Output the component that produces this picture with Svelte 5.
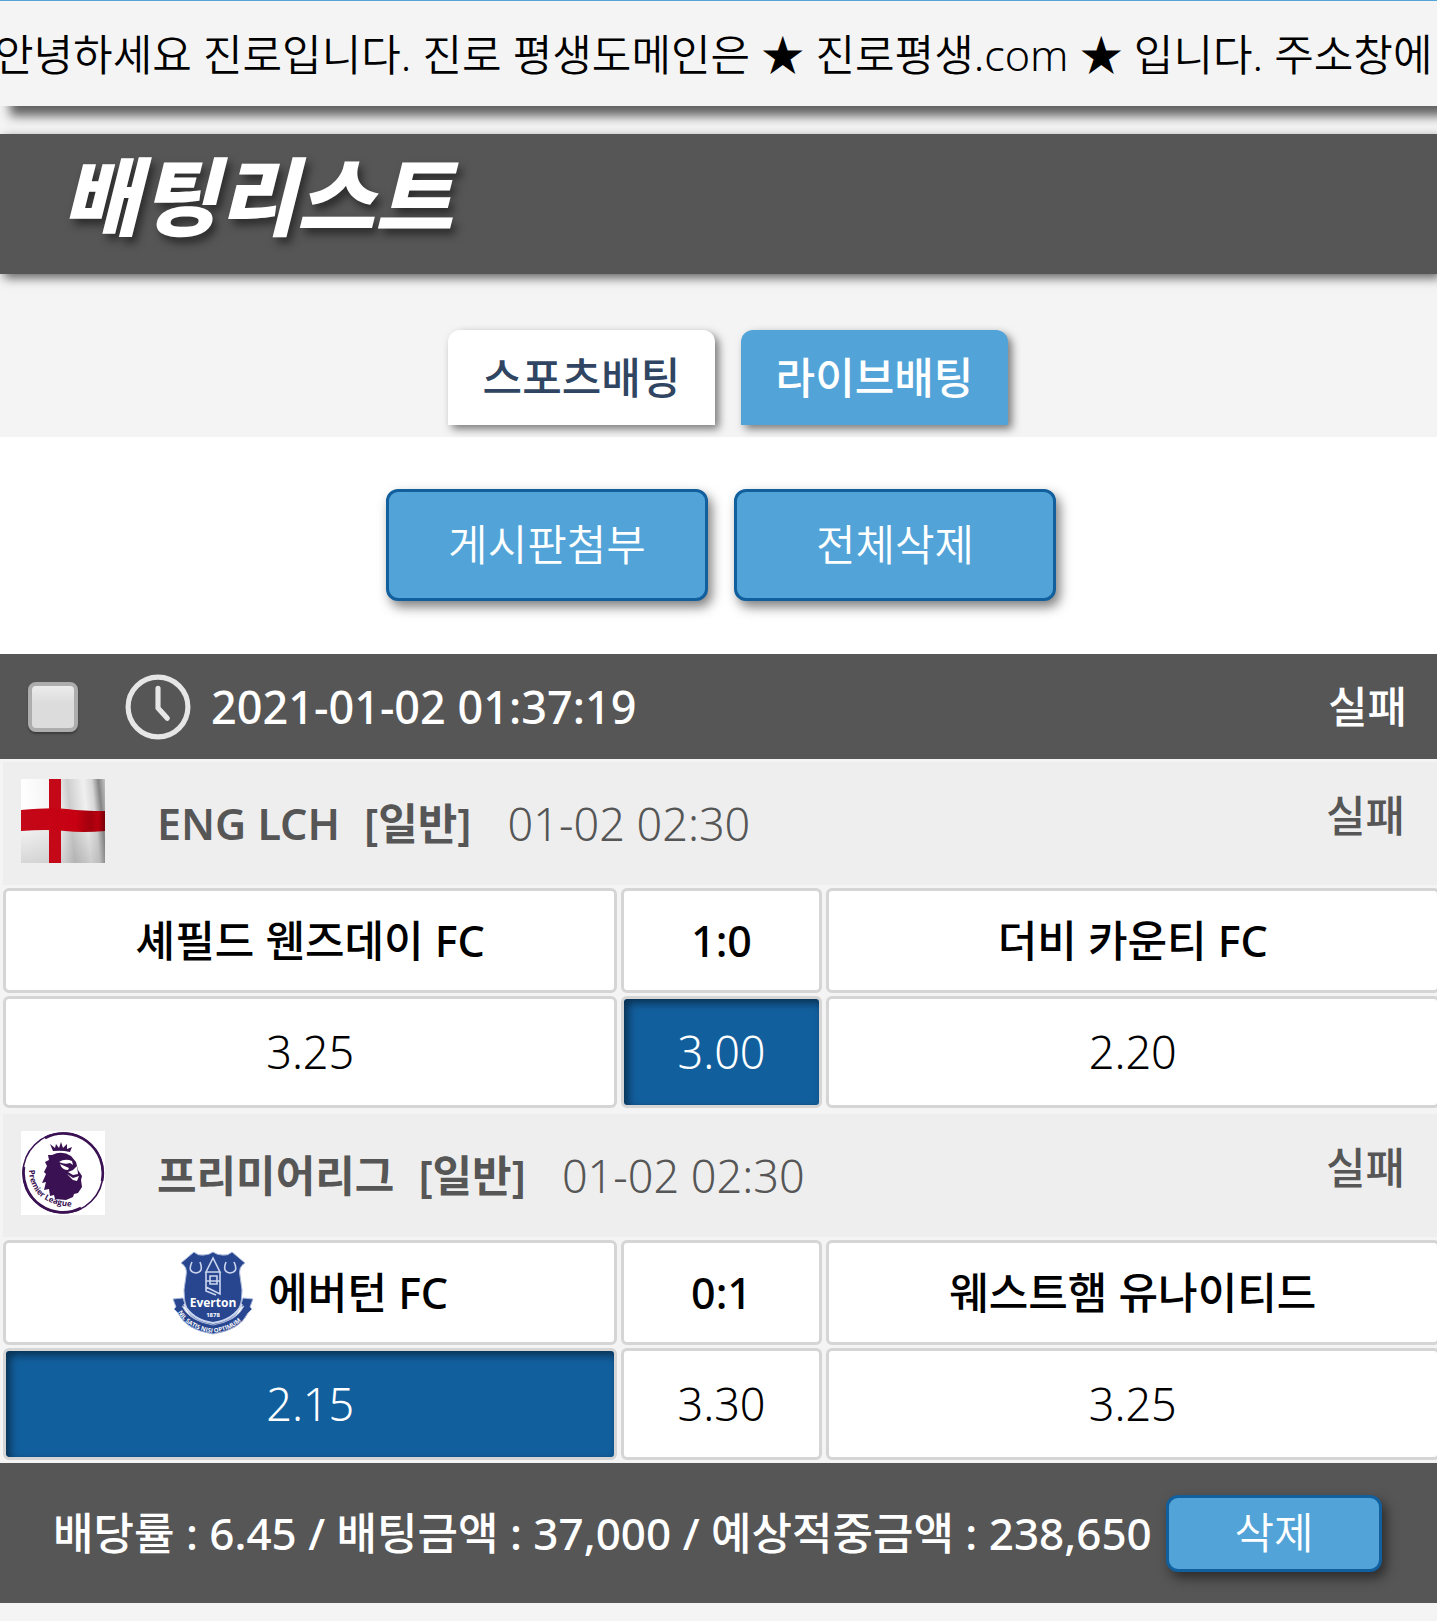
<script lang="ts">
  const leagues = [
    {
      icon: 'england',
      name: 'ENG LCH',
      kind: '[일반]',
      time: '01-02 02:30',
      status: '실패',
      home: '셰필드 웬즈데이 FC',
      crest: false,
      score: '1:0',
      away: '더비 카운티 FC',
      odds: ['3.25', '3.00', '2.20'],
      picked: 1
    },
    {
      icon: 'premier',
      name: '프리미어리그',
      kind: '[일반]',
      time: '01-02 02:30',
      status: '실패',
      home: '에버턴 FC',
      crest: true,
      score: '0:1',
      away: '웨스트햄 유나이티드',
      odds: ['2.15', '3.30', '3.25'],
      picked: 0
    }
  ];

  let checked = $state(false);
</script>

<div class="page">
  <div class="notice">
    <p>안녕하세요 진로입니다. 진로 평생도메인은 ★ 진로평생.com ★ 입니다. 주소창에</p>
  </div>

  <header class="title-bar">
    <h1>배팅리스트</h1>
  </header>

  <nav class="tabs">
    <button class="tab">스포츠배팅</button>
    <button class="tab active">라이브배팅</button>
  </nav>

  <div class="actions">
    <button class="btn">게시판첨부</button>
    <button class="btn">전체삭제</button>
  </div>

  <section class="slip">
    <div class="slip-head">
      <input type="checkbox" aria-label="2021-01-02 01:37:19" bind:checked />
      <svg class="clock" viewBox="0 0 64 64">
        <circle cx="32" cy="32" r="29" />
        <path d="M32 14v19l9 10" />
      </svg>
      <time>2021-01-02 01:37:19</time>
      <strong class="result">실패</strong>
    </div>

    {#each leagues as league}
      <div class="league">
        {#if league.icon === 'england'}
          <svg class="league-icon" viewBox="0 0 84 84">
            <defs>
              <linearGradient id="cloth" x1="0" y1="0.1" x2="1" y2="0">
                <stop offset="0" stop-color="#fff" />
                <stop offset="0.42" stop-color="#f2f2f2" />
                <stop offset="0.55" stop-color="#cdcdcd" />
                <stop offset="0.74" stop-color="#f0f0f0" />
                <stop offset="0.84" stop-color="#d8d8d8" />
                <stop offset="0.92" stop-color="#858585" />
                <stop offset="1" stop-color="#c4c4c4" />
              </linearGradient>
              <linearGradient id="shade" x1="0" y1="0" x2="0" y2="1">
                <stop offset="0.4" stop-color="#777" stop-opacity="0" />
                <stop offset="1" stop-color="#777" stop-opacity="0.3" />
              </linearGradient>
              <linearGradient id="band" x1="0" y1="0" x2="1" y2="0">
                <stop offset="0" stop-color="#c30818" />
                <stop offset="0.65" stop-color="#c70012" />
                <stop offset="0.82" stop-color="#a3000d" />
                <stop offset="0.92" stop-color="#b8000f" />
                <stop offset="1" stop-color="#760007" />
              </linearGradient>
            </defs>
            <rect width="84" height="84" fill="url(#cloth)" />
            <rect width="84" height="84" fill="url(#shade)" />
            <path d="M28 0h12v84H28z" fill="#c40818" />
            <path d="M0 31Q30 28 46 30T84 32V52Q62 54 44 52T0 52z" fill="url(#band)" />
          </svg>
        {:else}
          <svg class="league-icon" viewBox="0 0 84 84">
            <rect width="84" height="84" fill="#fff" />
            <g fill="none" stroke="#3a1152">
              <circle cx="42" cy="42" r="40" stroke-width="1.6" />
              <path d="M24 7A39.500 39.500 0 0 1 81 50M60 77A39.500 39.500 0 0 1 3 36" stroke-width="2.6" />
            </g>
            <path
              d="M32 20l-3-7 5 4 1-4 3 4 2-6 2 6 4-4v5l5-2-2 5q-8-2-17-1z"
              fill="#3a1152"
            />
            <path
              d="M31 24q10-5 19 1l5 6 2 8 4 6-1 4 1 7-4 6-4 1-1 3-7 3-11-1-1-4-4 1-1-7-5 1 2-8-4 1 4-9-2-2 3-6-2-4 4-2-1-5z"
              fill="#3a1152"
            />
            <path
              d="M38 31q6-4 13-1l1 4-3-2q-5 2-11-1zM39 33l9 4-1 2q-6 0-8-6zM47 41l5-2 4-4 1 8-5 1zM46 43l6 4 6-2-2 5-4-1z"
              fill="#fff"
            />
            <path id="ring" d="M8 39Q9 74 54 76" fill="none" />
            <text class="ring-text"><textPath href="#ring">Premier League</textPath></text>
          </svg>
        {/if}
        <p class="league-info">
          <strong>{league.name}</strong>
          <strong class="kind">{league.kind}</strong>
          <span class="number">{league.time}</span>
        </p>
        <span class="league-status">{league.status}</span>
      </div>

      <div class="match">
        <div class="cell team">
          {#if league.crest}
            <svg class="crest" viewBox="0 0 82 84">
              <g fill="#27468f" stroke="#a9b7da" stroke-width="1">
                <path
                  d="M22 1q4 4 10 3 5 0 9-3 4 3 9 3 6 1 10-3l13 11q-7 4-5 13l2 14q0 22-10 28-9 6-19 8-10-2-19-8-10-6-10-28l2-14q2-9-5-13z"
                />
                <path
                  d="M1 48l10-1 3 9-4-1q7 15 31 19 24-4 31-19l-4 1 3-9 10 1-3 8 2 2-4 4q-8 17-35 21Q14 79 6 62l-4-4 2-2z"
                />
              </g>
              <g fill="none" stroke="#cbd5ee" stroke-width="1.6">
                <path d="M41 7l-7 14h14zM34 21v15l14 7V21M38 25h7v8h-7zM34 30h14M34 36v4l10 4" />
                <path d="M20 11q-5 10 4 11 8-1 4-11M54 11q-4 10 4 11 9-1 4-11" />
                <path d="M12 53q8 16 29 19 21-3 29-19" stroke-width="2" />
              </g>
              <text class="crest-name" x="41" y="56">Everton</text>
              <text class="crest-year" x="41" y="66">1878</text>
              <path id="motto" d="M6 61q9 17 35 21 26-4 35-21" fill="none" />
              <text class="crest-motto"><textPath href="#motto">NIL SATIS NISI OPTIMUM</textPath></text>
            </svg>
          {/if}
          {league.home}
        </div>
        <div class="cell team">{league.score}</div>
        <div class="cell team">{league.away}</div>
        {#each league.odds as odd, i}
          <div class="cell number" class:picked={i === league.picked}>{odd}</div>
        {/each}
      </div>
    {/each}

    <div class="slip-foot">
      <strong>배당률 : 6.45 / 배팅금액 : 37,000 / 예상적중금액 : 238,650</strong>
      <button class="btn small">삭제</button>
    </div>
  </section>
</div>

<style>
  :global(body) {
    background: #f4f4f4;
  }

  .page {
    overflow-x: hidden;
    font-family: 'Noto Sans', 'DejaVu Sans', 'Noto Sans CJK KR', sans-serif;
    font-size: 43px;
    font-weight: 350;
    line-height: 60px;
    color: #000;
  }

  p,
  h1 {
    margin: 0;
  }

  button {
    font: inherit;
    padding: 0;
    border: 0;
    cursor: pointer;
  }

  strong {
    font-weight: 500;
  }

  .number {
    font-size: 45px;
  }

  .notice {
    padding: 24px 0 21px;
    border-top: 1px solid #52a4d8;
    background: #f4f4f4;
    box-shadow: 10px 10px 10px rgba(0, 0, 0, 0.6);
    white-space: nowrap;
  }

  .notice p {
    margin-left: -6px;
  }

  .title-bar {
    position: relative;
    margin-top: 28px;
    padding: 18px 62px 42px;
    background: #565656;
    box-shadow: 4px 4px 10px rgba(0, 0, 0, 0.6);
  }

  h1 {
    font-family: 'Noto Sans CJK KR', sans-serif;
    font-size: 85px;
    font-weight: 900;
    font-style: italic;
    line-height: 80px;
    color: #fff;
    text-shadow: 4px 6px 8px rgba(0, 0, 0, 0.5);
  }

  .tabs {
    display: flex;
    justify-content: center;
    gap: 26px;
    padding: 56px 0 12px 19px;
  }

  .tab {
    width: 267px;
    height: 95px;
    border-radius: 12px 12px 0 0;
    background: #fff;
    box-shadow: 4px 4px 8px rgba(0, 0, 0, 0.5);
    font-weight: 500;
    color: #2f4562;
  }

  .tab.active {
    background: #52a4d8;
    color: #fff;
  }

  .actions {
    display: flex;
    justify-content: center;
    gap: 26px;
    padding: 52px 0 53px 5px;
    background: #fff;
  }

  .btn {
    box-sizing: border-box;
    width: 322px;
    height: 112px;
    border: 3px solid #125f9e;
    border-radius: 12px;
    background: #52a4d8;
    box-shadow: 4px 6px 12px rgba(0, 0, 0, 0.5);
    color: #fff;
  }

  .btn.small {
    flex-shrink: 0;
    width: 216px;
    height: 77px;
  }

  .slip-head {
    display: flex;
    align-items: center;
    height: 105px;
    padding: 0 30px 0 28px;
    background: #565656;
    color: #fff;
  }

  .slip-head input {
    appearance: none;
    box-sizing: border-box;
    width: 50px;
    height: 50px;
    margin: 0;
    border: 4px solid #adadad;
    border-radius: 8px;
    background: linear-gradient(#ececec, #dcdcdc 40%);
    box-shadow: 0 2px 2px rgba(0, 0, 0, 0.3);
  }

  .clock {
    width: 66px;
    height: 66px;
    margin: 0 20px 0 47px;
    fill: none;
    stroke: #e6e6e6;
    stroke-width: 5;
    stroke-linecap: round;
    stroke-linejoin: round;
  }

  time {
    font-size: 45px;
    font-weight: 500;
  }

  .result {
    margin-left: auto;
  }

  .league {
    display: flex;
    align-items: center;
    height: 123px;
    margin: 3px 0 3px 3px;
    padding: 0 32px 0 18px;
    box-sizing: border-box;
    background: #eee;
    color: #565656;
  }

  .league-icon {
    width: 84px;
    height: 84px;
    margin-bottom: 6px;
  }

  .ring-text {
    font: bold 8px 'Open Sans', sans-serif;
    fill: #3a1152;
  }

  .league-info {
    display: flex;
    margin-left: 52px;
  }

  .league-info strong {
    font-weight: 600;
  }

  .kind {
    margin: 0 36px 0 24px;
  }

  .league-status {
    margin: 0 0 16px auto;
    font-weight: 500;
  }

  .match {
    display: grid;
    grid-template-columns: 43fr 14fr 43fr;
    grid-template-rows: 105px 112px;
    gap: 3px 4px;
    margin: 0 -3px 6px 3px;
  }

  .match:has(+ .slip-foot) {
    margin-bottom: 3px;
  }

  .cell {
    display: flex;
    align-items: center;
    justify-content: center;
    border: 3px solid #d5d5d5;
    border-radius: 6px;
    background: #fff;
  }

  .team {
    font-weight: 500;
  }

  .picked {
    background: #125f9e;
    box-shadow: inset 4px 4px 8px rgba(0, 0, 0, 0.5);
    color: #fff;
  }

  .crest {
    width: 82px;
    height: 84px;
    margin-right: 14px;
  }

  .crest text {
    font-family: 'Open Sans', sans-serif;
    font-weight: 700;
    fill: #fff;
  }

  .crest .crest-name,
  .crest .crest-year {
    font-size: 12px;
    text-anchor: middle;
  }

  .crest .crest-year {
    font-size: 6px;
  }

  .crest .crest-motto {
    font-size: 6px;
  }

  .slip-foot {
    display: flex;
    align-items: center;
    justify-content: space-between;
    height: 140px;
    padding: 0 55px 0 53px;
    box-sizing: border-box;
    background: #565656;
    color: #fff;
    white-space: nowrap;
  }

  .slip-foot strong {
    font-size: 44px;
  }
</style>
